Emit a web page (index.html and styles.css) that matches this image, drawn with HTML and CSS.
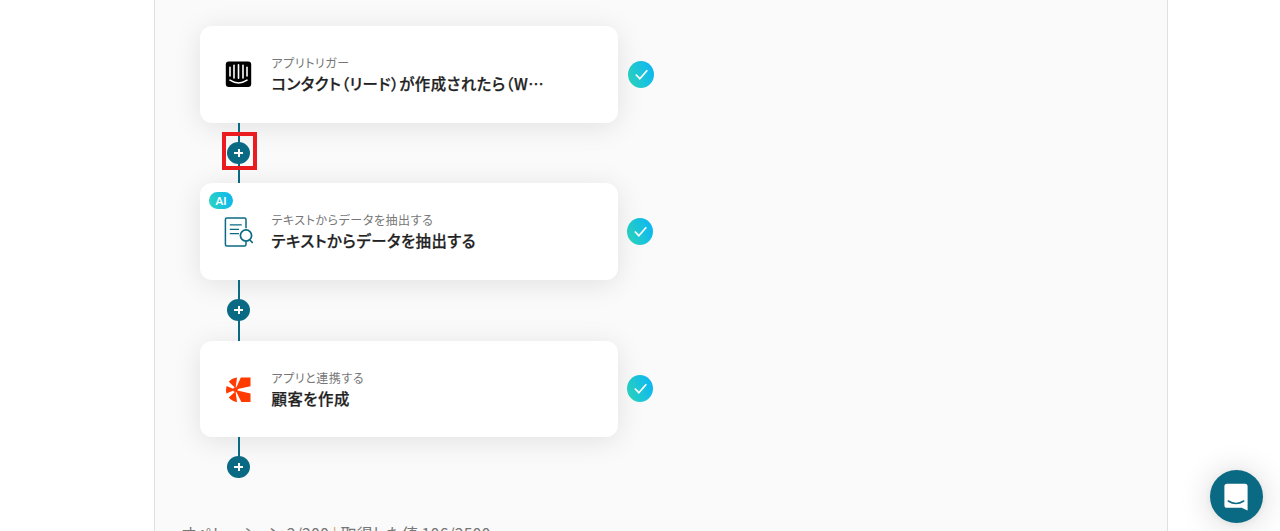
FILE: index.html
```html
<!DOCTYPE html>
<html lang="ja">
<head>
    <meta charset="UTF-8">
    <meta name="viewport" content="width=device-width, initial-scale=1.0">
    <title>フローボット</title>
    <link rel="stylesheet" href="styles.css">
</head>
<body>
    <svg width="0" height="0" class="defs">
        <defs>
            <linearGradient id="grad" x1="0" y1="0.7" x2="1" y2="0.3">
                <stop offset="0" stop-color="#2ad5c0"/>
                <stop offset="1" stop-color="#0db5f2"/>
            </linearGradient>
            <symbol id="check" viewBox="0 0 26 27">
                <ellipse cx="13" cy="13.5" rx="13" ry="13.5" fill="url(#grad)"/>
                <path d="M7.8 13.5l4 4.2 7.5-8.4" fill="none" stroke="#fff" stroke-width="1.7"/>
            </symbol>
        </defs>
    </svg>

    <main class="panel">
        <div class="flow">
            <div class="row">
                <div class="card">
                    <svg class="icon" viewBox="0 0 30 30">
                        <rect x="2.8" y="2.6" width="25.4" height="25.4" rx="3" fill="#000"/>
                        <path d="M7 8.2v8.8M11 6.3v12.6M15.5 5.8v13.5M20 6.3v12.6M24 8.2v8.8" stroke="#fff" stroke-width="1.6" stroke-linecap="round"/>
                        <path d="M7 21.2q8.5 5.6 17 0" fill="none" stroke="#fff" stroke-width="1.6" stroke-linecap="round"/>
                    </svg>
                    <div class="text">
                        <div class="label">アプリトリガー</div>
                        <div class="title">コンタクト（リード）が作成されたら（W…</div>
                    </div>
                </div>
                <svg class="check first"><use href="#check"/></svg>
            </div>

            <div class="connector">
                <button class="add"></button>
                <div class="highlight"></div>
            </div>

            <div class="row">
                <div class="card">
                    <span class="badge">AI</span>
                    <svg class="icon" viewBox="0 0 30 30" fill="none" stroke="#0b6a83" stroke-width="1.5">
                        <path d="M23 11.2V2.4q0-1.5-1.5-1.5H3.9q-1.5 0-1.5 1.5v25q0 1.5 1.5 1.5h17.6q1.5 0 1.5-1.5V24"/>
                        <path d="M6.8 7.8h12M6.8 12.3h9.2M6.8 16.7h9.2" stroke-width="1.3"/>
                        <circle cx="23" cy="18.5" r="5.6" stroke-width="1.7"/>
                        <path d="M26.8 23l3 3" stroke-width="1.7"/>
                    </svg>
                    <div class="text">
                        <div class="label">テキストからデータを抽出する</div>
                        <div class="title">テキストからデータを抽出する</div>
                    </div>
                </div>
                <svg class="check"><use href="#check"/></svg>
            </div>

            <div class="connector">
                <button class="add"></button>
            </div>

            <div class="row">
                <div class="card">
                    <svg class="icon" viewBox="0 0 30 30" fill="#ff3b00">
                        <path d="M12.4 15.5L17.8 3.6h9.7v8.6z"/>
                        <path d="M12.4 15.9L27.5 19.4v8.6H18.4z"/>
                        <path d="M12.6 14.2L14 3.6Q9.2 4 5.8 7.8z"/>
                        <path d="M12.6 17.2L14 28Q9 27.4 5.8 23.6z"/>
                        <path d="M12.3 15.7L3.6 12Q2.5 15.6 3.4 19.4z"/>
                        <circle cx="12.4" cy="15.7" r="2.4"/>
                    </svg>
                    <div class="text lower">
                        <div class="label">アプリと連携する</div>
                        <div class="title">顧客を作成</div>
                    </div>
                </div>
                <svg class="check"><use href="#check"/></svg>
            </div>

            <div class="connector last">
                <button class="add"></button>
            </div>
        </div>

        <div class="usage">オペレーション 2/200 <span class="divider">|</span> 取得した値 106/2500</div>
    </main>

    <button class="chat">
        <svg width="24" height="28" viewBox="0 0 24 28">
            <path d="M3 0.8h18q2.6 0 2.6 2.6v24.2l-6-2.8H3q-2.6 0-2.6-2.6V3.4q0-2.6 2.6-2.6z" fill="#fff"/>
            <path d="M4.3 18q7.7 4.8 15.4 0" fill="none" stroke="#0b6a83" stroke-width="1.5" stroke-linecap="round"/>
        </svg>
    </button>
</body>
</html>
```

FILE: styles.css
```css
* {
    box-sizing: border-box;
}

body {
    margin: 0;
    height: 531px;
    overflow: hidden;
    background: #fff;
    font-family: "Noto Sans CJK JP", sans-serif;
}

.defs {
    position: absolute;
}

.panel {
    width: 1014px;
    height: 531px;
    margin-left: 154px;
    padding: 26px 0 0 45px;
    background: #fafafa;
    border-left: 1px solid #e0e0e0;
    border-right: 1px solid #e0e0e0;
    overflow: hidden;
}

.row {
    display: flex;
    align-items: center;
    gap: 9px;
}

.card {
    position: relative;
    display: flex;
    align-items: center;
    width: 418px;
    height: 96.5px;
    padding-left: 23px;
    background: #fff;
    border-radius: 12px;
    box-shadow: 0 4px 28px rgba(0, 0, 0, 0.1);
}

.icon {
    width: 30px;
    height: 30px;
    margin-right: 18.5px;
}

.text {
    padding-bottom: 1.6px;
    font-feature-settings: "palt";
    white-space: nowrap;
}

.text.lower {
    padding-bottom: 0;
}

.label {
    font-size: 12px;
    line-height: 19px;
    letter-spacing: 0.55px;
    color: #777;
}

.title {
    font-size: 15.4px;
    font-weight: 500;
    line-height: 22px;
    letter-spacing: 0.5px;
    color: #222;
    -webkit-text-stroke: 0.25px #222;
}

.check {
    width: 26px;
    height: 27px;
}

.check.first {
    margin-left: 1px;
}

.badge {
    position: absolute;
    top: 9px;
    left: 9px;
    width: 24px;
    height: 17px;
    border-radius: 9px;
    background: linear-gradient(80deg, #2ad5c0, #0db5f2);
    color: #fff;
    font-family: Lato, sans-serif;
    font-size: 11px;
    font-weight: 700;
    line-height: 17px;
    text-align: center;
}

.connector {
    position: relative;
    display: flex;
    align-items: center;
    justify-content: center;
    width: 77px;
    height: 60.8px;
    background: linear-gradient(#0b6a83, #0b6a83) 38px 0 / 2px 100% no-repeat;
}

.connector.last {
    height: 41px;
    align-items: flex-end;
}

.add {
    width: 23px;
    height: 22px;
    padding: 0;
    border: none;
    border-radius: 50%;
    background:
        linear-gradient(#fff, #fff) center / 9px 2px no-repeat,
        linear-gradient(#fff, #fff) center / 2px 8px no-repeat,
        #0b6a83;
}

.highlight {
    position: absolute;
    top: 9.5px;
    left: 22px;
    width: 35px;
    height: 38px;
    border: 4px solid #ea1c1f;
}

.usage {
    margin: 42.9px 0 0 -19px;
    font-size: 16px;
    font-feature-settings: "palt";
    line-height: 24px;
    letter-spacing: 0.08px;
    color: #777;
    white-space: nowrap;
}

.divider {
    color: #d9a066;
}

.chat {
    position: absolute;
    right: 17px;
    bottom: 8px;
    display: flex;
    align-items: center;
    justify-content: center;
    width: 53px;
    height: 53px;
    padding: 0 1px 0 0;
    border: none;
    border-radius: 50%;
    background: #0b6a83;
    box-shadow: 0 1px 6px rgba(0, 0, 0, 0.06), 0 2px 32px rgba(0, 0, 0, 0.16);
}
```
